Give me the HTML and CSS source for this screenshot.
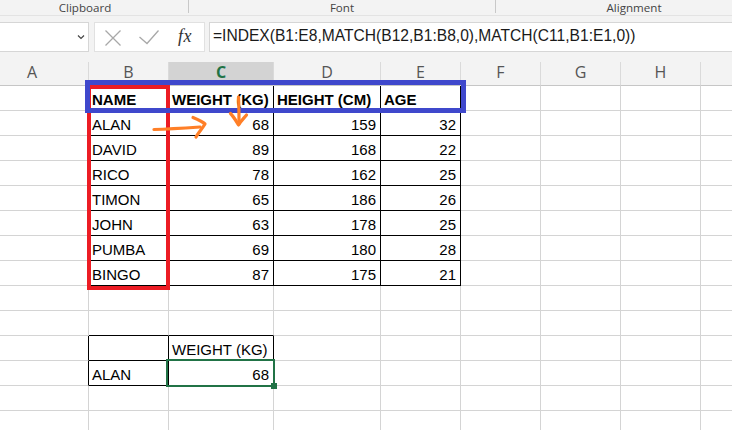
FILE: index.html
```html
<!DOCTYPE html>
<html>
<head>
<meta charset="utf-8">
<link rel="stylesheet" href="styles.css">
</head>
<body>
<div class="page">
  <div class="ribbon">
    <div class="group g-clip">Clipboard</div>
    <div class="group g-font">Font</div>
    <div class="group g-align">Alignment</div>
  </div>
  <div class="fbar">
    <div class="namebox">
      <svg class="chev" width="8" height="6" viewBox="0 0 8 6"><path d="M1 1.5 L4 4.5 L7 1.5" fill="none" stroke="#444" stroke-width="1.2"/></svg>
    </div>
    <div class="btnbox">
      <svg class="ico" width="18" height="18" viewBox="0 0 18 18"><path d="M1.5 1.5 L16.5 16.5 M16.5 1.5 L1.5 16.5" stroke="#a8a8a8" stroke-width="1.3" fill="none"/></svg>
      <svg class="ico" width="22" height="16" viewBox="0 0 22 16"><path d="M1.5 8 L9 14.5 L20.5 1.5" stroke="#a8a8a8" stroke-width="1.3" fill="none"/></svg>
      <span class="fx">fx</span>
    </div>
    <div class="formula">=INDEX(B1:E8,MATCH(B12,B1:B8,0),MATCH(C11,B1:E1,0))</div>
  </div>
  <div class="sheet">
    <div class="row head">
      <div class="h ha">A</div><div class="h">B</div><div class="h hsel">C</div><div class="h">D</div><div class="h">E</div><div class="h">F</div><div class="h">G</div><div class="h">H</div><div class="h"></div>
    </div>
    <div class="row">
      <div class="c bl"></div><div class="c t b">NAME</div><div class="c t b">WEIGHT (KG)</div><div class="c t b">HEIGHT (CM)</div><div class="c t b">AGE</div><div class="c"></div><div class="c"></div><div class="c"></div><div class="c"></div>
    </div>
    <div class="row">
      <div class="c bl"></div><div class="c t">ALAN</div><div class="c t n">68</div><div class="c t n">159</div><div class="c t n">32</div><div class="c"></div><div class="c"></div><div class="c"></div><div class="c"></div>
    </div>
    <div class="row">
      <div class="c bl"></div><div class="c t">DAVID</div><div class="c t n">89</div><div class="c t n">168</div><div class="c t n">22</div><div class="c"></div><div class="c"></div><div class="c"></div><div class="c"></div>
    </div>
    <div class="row">
      <div class="c bl"></div><div class="c t">RICO</div><div class="c t n">78</div><div class="c t n">162</div><div class="c t n">25</div><div class="c"></div><div class="c"></div><div class="c"></div><div class="c"></div>
    </div>
    <div class="row">
      <div class="c bl"></div><div class="c t">TIMON</div><div class="c t n">65</div><div class="c t n">186</div><div class="c t n">26</div><div class="c"></div><div class="c"></div><div class="c"></div><div class="c"></div>
    </div>
    <div class="row">
      <div class="c bl"></div><div class="c t">JOHN</div><div class="c t n">63</div><div class="c t n">178</div><div class="c t n">25</div><div class="c"></div><div class="c"></div><div class="c"></div><div class="c"></div>
    </div>
    <div class="row">
      <div class="c bl"></div><div class="c t">PUMBA</div><div class="c t n">69</div><div class="c t n">180</div><div class="c t n">28</div><div class="c"></div><div class="c"></div><div class="c"></div><div class="c"></div>
    </div>
    <div class="row">
      <div class="c bl"></div><div class="c t">BINGO</div><div class="c t n">87</div><div class="c t n">175</div><div class="c t n">21</div><div class="c"></div><div class="c"></div><div class="c"></div><div class="c"></div>
    </div>
    <div class="row">
      <div class="c"></div><div class="c"></div><div class="c"></div><div class="c"></div><div class="c"></div><div class="c"></div><div class="c"></div><div class="c"></div><div class="c"></div>
    </div>
    <div class="row">
      <div class="c"></div><div class="c bb"></div><div class="c bb"></div><div class="c"></div><div class="c"></div><div class="c"></div><div class="c"></div><div class="c"></div><div class="c"></div>
    </div>
    <div class="row">
      <div class="c bl"></div><div class="c t"></div><div class="c t">WEIGHT (KG)</div><div class="c"></div><div class="c"></div><div class="c"></div><div class="c"></div><div class="c"></div><div class="c"></div>
    </div>
    <div class="row">
      <div class="c bl"></div><div class="c t">ALAN</div><div class="c t n">68</div><div class="c"></div><div class="c"></div><div class="c"></div><div class="c"></div><div class="c"></div><div class="c"></div>
    </div>
    <div class="row">
      <div class="c"></div><div class="c"></div><div class="c"></div><div class="c"></div><div class="c"></div><div class="c"></div><div class="c"></div><div class="c"></div><div class="c"></div>
    </div>
    <div class="row">
      <div class="c"></div><div class="c"></div><div class="c"></div><div class="c"></div><div class="c"></div><div class="c"></div><div class="c"></div><div class="c"></div><div class="c"></div>
    </div>
  </div>

  <div class="mark-red"></div>
  <div class="mark-blue"></div>
  <svg class="arrows" width="732" height="430" viewBox="0 0 732 430">
    <g fill="none" stroke="#ff7f27" stroke-width="3.2" stroke-linecap="round" stroke-linejoin="round">
      <path d="M154 129.5 C170 129 185 128 200 127"/>
      <path d="M193 117.5 C199 120 203 122 205 124 C202 129 198 133 196 137"/>
      <path d="M238.5 97 C239 105 239 115 239 124"/>
      <path d="M230.5 113.5 C234 117 236 121 238.5 125 C241 121 244 118 246.5 115"/>
    </g>
  </svg>
  <div class="sel"></div>
  <div class="handle"></div>
</div>
</body>
</html>
```

FILE: styles.css
```css
html, body {
  margin: 0;
  padding: 0;
  background: #ffffff;
}
body {
  width: 732px;
  height: 430px;
  overflow: hidden;
  font-family: "Liberation Sans", Arial, sans-serif;
}
.page {
  position: relative;
  width: 732px;
  height: 430px;
  overflow: hidden;
  background: #f3f3f3;
}

/* ribbon group labels */
.ribbon {
  display: flex;
  height: 16px;
  box-sizing: border-box;
  border-bottom: 1px solid #e3e3e3;
  background: #f3f3f3;
}
.group {
  box-sizing: border-box;
  height: 13px;
  line-height: 16px;
  font-family: "Open Sans", "Liberation Sans", sans-serif;
  font-size: 11.6px;
  color: #444;
  text-align: center;
  border-right: 1px solid #c8c8c8;
  flex: none;
  overflow: visible;
}
.g-clip { width: 189px; padding-right: 18px; }
.g-font { width: 307px; }
.g-align { width: 276px; border-right: none; }

/* formula bar */
.fbar {
  display: flex;
  align-items: flex-start;
  height: 46px;
  box-sizing: border-box;
  padding-top: 6px;
  gap: 4px;
}
.namebox {
  position: relative;
  width: 90px;
  height: 30px;
  margin-left: -1px;
  box-sizing: border-box;
  background: #fff;
  border: 1px solid #d6d6d6;
  flex: none;
  margin-right: 1px;
}
.chev {
  position: absolute;
  left: 77px;
  top: 11px;
}
.btnbox {
  width: 111px;
  height: 30px;
  box-sizing: border-box;
  background: #fff;
  border: 1px solid #e1e1e1;
  display: flex;
  align-items: center;
  padding-left: 9px;
  flex: none;
}
.btnbox .ico:first-child { margin-right: 16px; margin-top: 1px; }
.fx {
  font-family: "Liberation Serif", "DejaVu Serif", serif;
  font-style: italic;
  font-size: 18px;
  color: #333;
  margin-left: 18px;
  margin-top: -1px;
  letter-spacing: 0.5px;
}
.formula {
  flex: 1;
  height: 30px;
  margin-right: -6px;
  box-sizing: border-box;
  background: #fff;
  border: 1px solid #d6d6d6;
  padding: 0 0 3px 3px;
  line-height: 25px;
  font-size: 15.6px;
  color: #1a1a1a;
  white-space: nowrap;
  overflow: hidden;
}

/* sheet grid */
.sheet {
  background: #fff;
}
.row {
  display: grid;
  grid-template-columns: 89px 80px 105px 107px 80px 80px 80px 80px 40px;
}
.head {
  background: #f3f3f3;
}
.h {
  height: 24px;
  box-sizing: border-box;
  border-right: 1px solid #dadada;
  border-bottom: 1px solid #c6c6c6;
  padding-bottom: 2px;
  line-height: 21px;
  text-align: center;
  font-family: "Open Sans", "Liberation Sans", sans-serif;
  font-size: 16px;
  color: #555;
}
.ha { padding-right: 24px; }
.hsel {
  background: #d3d3d3;
  color: #217346;
  font-weight: 700;
}
.c {
  height: 25px;
  box-sizing: border-box;
  border-right: 1px solid #d4d4d4;
  border-bottom: 1px solid #d4d4d4;
  padding: 2px 3px 0 3px;
  line-height: 23px;
  font-size: 15px;
  color: #000;
  white-space: nowrap;
  overflow: hidden;
}
.t { border-right-color: #000; border-bottom-color: #000; }
.bl { border-right-color: #000; }
.bb { border-bottom-color: #000; }
.b { font-weight: 700; }
.n { text-align: right; padding-right: 4px; }

/* hand-drawn markings */
.mark-red {
  position: absolute;
  left: 87px;
  top: 85px;
  width: 83px;
  height: 205px;
  box-sizing: border-box;
  border: 4px solid #ec1c24;
}
.mark-blue {
  position: absolute;
  left: 85px;
  top: 80px;
  width: 381px;
  height: 33px;
  box-sizing: border-box;
  border: 5px solid #3f48cc;
}
.arrows {
  position: absolute;
  left: 0;
  top: 0;
}
.sel {
  position: absolute;
  left: 166px;
  top: 359px;
  width: 109px;
  height: 28px;
  box-sizing: border-box;
  border: 2px solid #217346;
}
.handle {
  position: absolute;
  left: 271px;
  top: 383px;
  width: 6px;
  height: 6px;
  background: #217346;
}
```
